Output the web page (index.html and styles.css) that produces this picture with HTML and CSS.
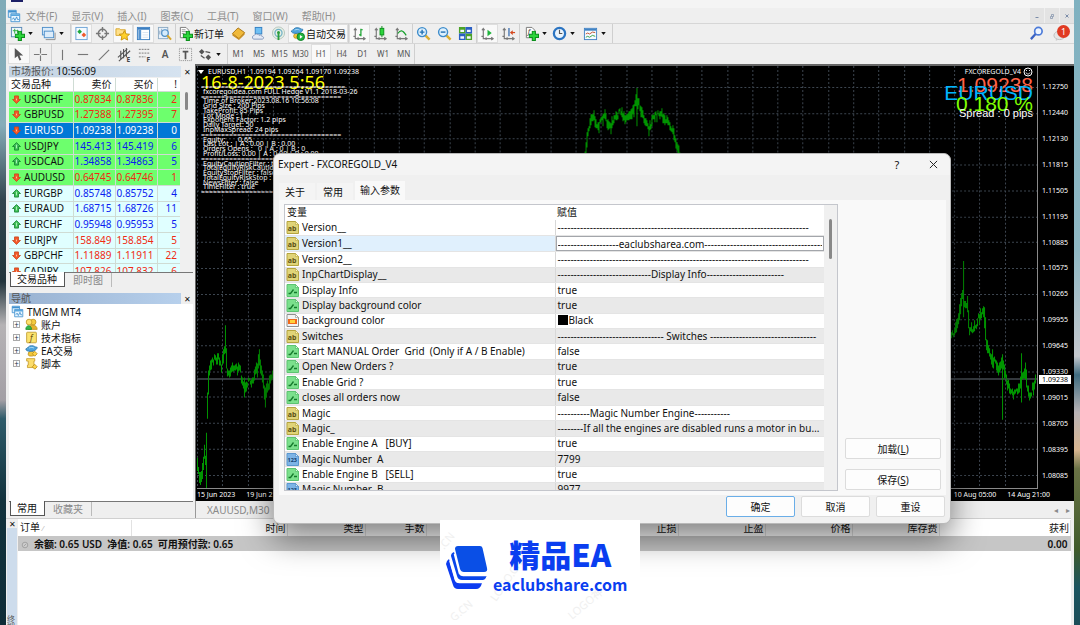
FILE: index.html
```
<!DOCTYPE html>
<html lang="zh-CN">
<head>
  <meta charset="UTF-8">
  <title>TMGM MT4 - EURUSD,H1</title>
  <meta name="viewport" content="width=device-width, initial-scale=1.0">
  <link rel="stylesheet" href="styles.css">
</head>
<body>
  <!-- shared icons -->
  <svg class="defs" aria-hidden="true">
    <symbol id="i-caret" viewBox="0 0 6 4"><path d="M0 0h6L3 4z" fill="#111"/></symbol>
    <symbol id="i-up" viewBox="0 0 10 10"><path d="M5 .6 9.4 5 7.2 5 7.2 9 2.8 9 2.8 5 .6 5z" fill="#3fc25a" stroke="#11802c" stroke-width=".9"/><path d="M5 3v4" stroke="#b6f5c0"/></symbol>
    <symbol id="i-down" viewBox="0 0 10 10"><path d="M5 9.4 .6 5 2.8 5 2.8 1 7.2 1 7.2 5 9.4 5z" fill="#f4592a" stroke="#c8441a" stroke-width=".9"/><path d="M5 4v2" stroke="#ffc9a8"/></symbol>
    <symbol id="i-ab" viewBox="0 0 13 13"><path d="M1 .5h8.500l3 3v9h-11.500z" fill="#e0d478" stroke="#b5a53f"/><path d="M9.500 .5v3h3z" fill="#fff7bd" stroke="#b5a53f" stroke-width=".6"/><text x="1.800" y="9.600" font-size="7" font-weight="700" fill="#5d5215">ab</text></symbol>
    <symbol id="i-bool" viewBox="0 0 13 13"><path d="M1 .5h8.500l3 3v9h-11.500z" fill="#7be08c" stroke="#5cc471"/><path d="M9.500 .5v3h3z" fill="#d5ffda" stroke="#45b05a" stroke-width=".6"/><path d="M2.500 9.500h2l3-4M8 8.500h3" fill="none" stroke="#157a2c" stroke-width="1.300"/></symbol>
    <symbol id="i-num" viewBox="0 0 13 13"><path d="M1 .5h8.500l3 3v9h-11.500z" fill="#7db4e6" stroke="#5a97cf"/><path d="M9.500 .5v3h3z" fill="#d6ebff" stroke="#4484bf" stroke-width=".6"/><text x="1.500" y="9" font-size="5.500" font-weight="700" fill="#123f6d">123</text></symbol>
    <symbol id="i-color" viewBox="0 0 13 13"><path d="M1 .5h8.500l3 3v9h-11.500z" fill="#f3f3f3" stroke="#8f8f8f"/><path d="M9.500 .5v3h3z" fill="#fff" stroke="#8f8f8f" stroke-width=".6"/><rect x="2" y="5" width="9" height="5" fill="#f26a1b"/><rect x="4" y="6" width="5" height="3" fill="#ffd23c"/></symbol>
    <symbol id="i-app" viewBox="0 0 16 16"><path d="M1.500 1.500h9v8h-9z" fill="#d9edfb" stroke="#3f90cf"/><path d="M1.500 3h9" stroke="#3f90cf" stroke-width="2"/><path d="M4.500 5.500h10v9h-10z" fill="#e9f6ff" stroke="#3f90cf"/><path d="M4.500 7h10" stroke="#59a6dd" stroke-width="2"/><path d="M6 12l1.500-2 1.500 3 2-4 1 3h1.500" fill="none" stroke="#3f90cf"/></symbol>
    <symbol id="i-axes" viewBox="0 0 16 16"><path d="M3.500 2.500v11h10M2 4.500l1.500-2 1.500 2M12 12l2 1.500-2 1.500M1.500 11h2M6.500 12v3" fill="none" stroke="#777" stroke-width="1.200"/></symbol>
    <symbol id="i-plus" viewBox="0 0 10 10"><path d="M3.500 .5h3v3h3v3h-3v3h-3v-3h-3v-3h3z" fill="#2bd53b" stroke="#0b8f1b"/></symbol>
    <symbol id="i-hat" viewBox="0 0 16 16"><path d="M4 13c0-3 1-4 4-4s4 2 4 4-8 3-8 0z" fill="#f0c63b" stroke="#b68a16"/><path d="M1 6c3-1 3-4 7-4s4 2 7 2c0 3-4 5-8 5S1 8 1 6z" fill="#4da3dc" stroke="#2c76ad"/><path d="M5 5c2-1 5-1 6 0" stroke="#bfe4fb" fill="none"/></symbol>
  </svg>

  <div class="app">
    <header class="titlebar"><span class="app-badge"></span></header>

    <nav class="menubar">
      <svg class="menu-logo"><use href="#i-app"/></svg>
      <button>文件(F)</button>
      <button>显示(V)</button>
      <button>插入(I)</button>
      <button>图表(C)</button>
      <button>工具(T)</button>
      <button>窗口(W)</button>
      <button>帮助(H)</button>
      <div class="mdi-buttons">
        <button aria-label="最小化"><svg viewBox="0 0 8 8"><path d="M2.500 5.500h3" stroke="#7b8ca8"/></svg></button>
        <button aria-label="还原"><svg viewBox="0 0 8 8"><path d="M2.500 4.500h2v2h-2zM3.500 4V2.500h2v2h-1" fill="none" stroke="#7b8ca8" stroke-width=".7"/></svg></button>
        <button aria-label="关闭"><svg viewBox="0 0 8 8"><path d="M2.500 2.500l3 3M5.500 2.500l-3 3" stroke="#7b8ca8"/></svg></button>
      </div>
    </nav>

    <div class="toolbar toolbar-main">
      <button class="tool drop" aria-label="新图表">
        <svg viewBox="0 0 16 16"><rect x="1.500" y="1.500" width="11" height="10" fill="#eef6fd" stroke="#5788b5"/><path d="M3 5h6M5 3v5M8 4v4" stroke="#2fae3e"/><use href="#i-plus" x="5" y="5" width="11" height="11"/></svg>
        <svg class="caret"><use href="#i-caret"/></svg>
      </button>
      <button class="tool drop" aria-label="配置">
        <svg viewBox="0 0 16 16"><rect x="1.500" y="1.500" width="11" height="8" fill="#dcecfa" stroke="#4e8fca"/><rect x="3.500" y="5.500" width="10" height="7" fill="#dcecfa" stroke="#4e8fca"/><path d="M5 14.500h10V7" fill="none" stroke="#8d8d8d"/></svg>
        <svg class="caret"><use href="#i-caret"/></svg>
      </button>
      <div class="group group-views">
        <button class="tool on" aria-label="市场报价"><svg viewBox="0 0 16 16"><rect x="2" y="1.500" width="12" height="13" fill="#f4faff" stroke="#6aa2d6"/><path d="M6 3.500l2.500 2.500L6 8.500 3.500 6z" fill="#1fa83c"/><path d="M10.500 7l2.500 2.500-2.500 2.500L8 9.500z" fill="#ef5a2b"/></svg></button>
        <button class="tool" aria-label="十字准线"><svg viewBox="0 0 16 16"><circle cx="8" cy="8" r="4.500" fill="none" stroke="#777" stroke-width="1.500"/><path d="M8 1v5M8 10v5M1 8h5M10 8h5" stroke="#777" stroke-width="1.500"/></svg></button>
        <button class="tool on" aria-label="导航"><svg viewBox="0 0 16 16"><path d="M1 3h4l1 1h5v6H1z" fill="#ffe08a" stroke="#d6a62e"/><path d="M10 5l1.700 3.400 3.800.4-2.800 2.500.8 3.700-3.500-1.900L6.500 15l.8-3.700L4.500 8.800l3.800-.4z" fill="#ffd028" stroke="#c8920b"/></svg></button>
        <button class="tool on" aria-label="数据窗口"><svg viewBox="0 0 16 16"><rect x="1.500" y="1.500" width="13" height="13" fill="#fff" stroke="#3b7fc2"/><path d="M2 3h12" stroke="#3b7fc2" stroke-width="2"/><path d="M4 4v10" stroke="#5895d0" stroke-width="3"/><path d="M7 7h6M7 9.500h6M7 12h6" stroke="#d5e3f1"/></svg></button>
        <button class="tool" aria-label="策略测试"><svg viewBox="0 0 16 16"><rect x="1.500" y="1.500" width="10" height="12" fill="#e7f1fa" stroke="#8ba8c2"/><path d="M3 5v4M5 3v6" stroke="#8ba8c2"/><circle cx="8.500" cy="7.500" r="3.500" fill="#d5ecfc" stroke="#4c8fc7" stroke-width="1.300"/><path d="M11 10l4 4.500" stroke="#d9a72c" stroke-width="2.200"/></svg></button>
      </div>
      <button class="tool text">
        <svg viewBox="0 0 16 16"><path d="M2.500 1.500h6l3 3v8h-9z" fill="#fff" stroke="#777"/><path d="M4 4h4M4 6h5M4 8h3" stroke="#999"/><use href="#i-plus" x="5" y="5" width="11" height="11"/></svg>
        <span>新订单</span>
      </button>
      <button class="tool narrow" aria-label="编辑器"><svg viewBox="0 0 16 16"><path d="M1.500 8l6-6 7 5-6 6.500z" fill="#f0b93a" stroke="#a87413"/><path d="M1.500 8v2l7 5 6-6V7l-6 6.500z" fill="#c98d1f"/></svg></button>
      <button class="tool narrow" aria-label="主机"><svg viewBox="0 0 16 16"><rect x="4.500" y="1.500" width="7" height="7" fill="#6fc0f4" stroke="#2f7ec2"/><path d="M3 14c-2 0-2-4 .5-4 1-2 4-2 5 0 2-1 3 0 3 1 2.500 0 2.500 3 .5 3z" fill="#e4eaf5" stroke="#8499bd"/></svg></button>
      <button class="tool narrow" aria-label="信号"><svg viewBox="0 0 16 16"><circle cx="8" cy="7.500" r="6.500" fill="#e6eee4" stroke="#b5c6bd"/><circle cx="8" cy="7.500" r="3.800" fill="none" stroke="#6fb0c6" stroke-width="1.300"/><circle cx="8" cy="7" r="1.600" fill="#2a9d3b"/><path d="M8 8v7" stroke="#2a9d3b" stroke-width="2"/></svg></button>
      <button class="tool text on">
        <svg viewBox="0 0 16 16"><use href="#i-hat" width="15" height="14"/><circle cx="11.500" cy="11.500" r="4" fill="#1fb43c" stroke="#0f8227"/><path d="M10.500 9.500l3 2-3 2z" fill="#fff"/></svg>
        <span>自动交易</span>
      </button>
      <div class="group group-3">
        <button class="tool on" aria-label="柱状图"><svg viewBox="0 0 16 16"><use href="#i-axes"/><path d="M9.500 3v8M9.500 4h2M7.500 9.500h2" stroke="#15a02b" stroke-width="1.300"/></svg></button>
        <button class="tool" aria-label="蜡烛图"><svg viewBox="0 0 16 16"><use href="#i-axes"/><path d="M9.500 0v12" stroke="#0b8f1b"/><rect x="7.500" y="2.500" width="4" height="7" fill="#2bd53b" stroke="#0b8f1b"/></svg></button>
        <button class="tool" aria-label="折线图"><svg viewBox="0 0 16 16"><use href="#i-axes"/><path d="M4 8c3-4 5-4 9 2" fill="none" stroke="#15a02b" stroke-width="1.300"/></svg></button>
      </div>
      <div class="group group-3">
        <button class="tool" aria-label="放大"><svg viewBox="0 0 16 16"><path d="M10 10l4.500 4.500" stroke="#dbae2f" stroke-width="2.600"/><circle cx="6.500" cy="6.500" r="4.800" fill="#dff1fd" stroke="#3d8ccb" stroke-width="1.500"/><path d="M4 6.500h5M6.500 4v5" stroke="#2171b4" stroke-width="1.500"/></svg></button>
        <button class="tool" aria-label="缩小"><svg viewBox="0 0 16 16"><path d="M10 10l4.500 4.500" stroke="#dbae2f" stroke-width="2.600"/><circle cx="6.500" cy="6.500" r="4.800" fill="#dff1fd" stroke="#3d8ccb" stroke-width="1.500"/><path d="M4 6.500h5" stroke="#2171b4" stroke-width="1.500"/></svg></button>
        <button class="tool" aria-label="平铺"><svg viewBox="0 0 16 16"><path d="M1 1h7v7H1zM8 8h7v7H8z" fill="#4aa227"/><path d="M8 1h7v7H8zM1 8h7v7H1z" fill="#2a5fc4"/><path d="M2.500 4h4v2.500h-4zM9.500 4h4v2.500h-4zM2.500 11h4v2.500h-4zM9.500 11h4v2.500h-4z" fill="#f3f8ff"/></svg></button>
      </div>
      <div class="group group-2">
        <button class="tool on" aria-label="自动滚动"><svg viewBox="0 0 16 16"><use href="#i-axes"/><path d="M8 4l4.500 3.500L8 11z" fill="#1fb43c"/></svg></button>
        <button class="tool" aria-label="图表平移"><svg viewBox="0 0 16 16"><use href="#i-axes"/><path d="M8.500 2v9" stroke="#3c6fb0" stroke-width="1.400"/><path d="M9.500 7l3-2.500v5z" fill="#d5481e"/><path d="M11 7h4" stroke="#d5481e" stroke-width="1.300"/></svg></button>
      </div>
      <button class="tool drop split" aria-label="技术指标">
        <svg viewBox="0 0 16 16"><path d="M2.500 1.500h6l3 3v8h-9z" fill="#fff" stroke="#777"/><text x="4" y="9" font-size="8" font-style="italic" fill="#444">f</text><use href="#i-plus" x="5" y="5" width="11" height="11"/></svg>
        <svg class="caret"><use href="#i-caret"/></svg>
      </button>
      <button class="tool drop" aria-label="周期">
        <svg viewBox="0 0 16 16"><circle cx="8" cy="8" r="6" fill="#eaf4fd" stroke="#2b74c2" stroke-width="2.400"/><path d="M8 4v4h3" fill="none" stroke="#555" stroke-width="1.200"/></svg>
        <svg class="caret"><use href="#i-caret"/></svg>
      </button>
      <button class="tool drop" aria-label="模板">
        <svg viewBox="0 0 16 16"><rect x="1.500" y="2.500" width="13" height="12" fill="#f5faff" stroke="#4183c4"/><path d="M2 4h12" stroke="#4183c4" stroke-width="2"/><path d="M3 8.500l2-1 2 1 3-2 3 .5" fill="none" stroke="#c0502d"/><path d="M3 12l2-1 2 1 3-2 3 1" fill="none" stroke="#2fa044"/></svg>
        <svg class="caret"><use href="#i-caret"/></svg>
      </button>
      <span class="bar-end"></span>
      <div class="toolbar-right">
        <button class="tool narrow" aria-label="搜索"><svg viewBox="0 0 16 16"><circle cx="10" cy="5.500" r="4" fill="#eef5ff" stroke="#4c7bd9" stroke-width="1.800"/><path d="M7 8.500L2 14" stroke="#3b63c4" stroke-width="2.400"/></svg></button>
        <button class="tool chat" aria-label="消息"><svg viewBox="0 0 16 16"><ellipse cx="7" cy="10" rx="6" ry="4.500" fill="#e6e6e6" stroke="#bdbdbd"/><path d="M3 13v3l3-2z" fill="#ccc"/></svg><span class="badge">1</span></button>
      </div>
    </div>

    <div class="toolbar toolbar-lines">
      <div class="group group-2">
        <button class="tool on" aria-label="光标"><svg viewBox="0 0 16 16"><path d="M4 1v11l3-2.500 2 5 2-1-2-4.500h4z" fill="#555"/></svg></button>
        <button class="tool" aria-label="十字"><svg viewBox="0 0 16 16"><path d="M8 1v6M8 9v6M1 8h6M9 8h6" stroke="#777" stroke-width="1.200"/></svg></button>
      </div>
      <div class="group group-draw">
        <button class="tool" aria-label="垂直线"><svg viewBox="0 0 16 16"><path d="M8 3v11" stroke="#777" stroke-width="1.200"/></svg></button>
        <button class="tool" aria-label="水平线"><svg viewBox="0 0 16 16"><path d="M3 8h11" stroke="#777" stroke-width="1.200"/></svg></button>
        <button class="tool" aria-label="趋势线"><svg viewBox="0 0 16 16"><path d="M3 14L14 3" stroke="#777" stroke-width="1.200"/></svg></button>
        <button class="tool" aria-label="通道"><svg viewBox="0 0 16 16"><path d="M1 11L11 2M2 15L14 4M4 4v9M7 2v10M10 1v10" stroke="#555" stroke-width="1.200"/><text x="10" y="16" font-size="7" font-weight="700" fill="#444">E</text></svg></button>
        <button class="tool" aria-label="斐波那契"><svg viewBox="0 0 16 16"><path d="M2 2.500h12M2 6.500h12M2 10.500h7" stroke="#777" stroke-dasharray="2 1"/><text x="10" y="16" font-size="7" font-weight="700" fill="#444">F</text></svg></button>
        <button class="tool letter">A</button>
        <button class="tool" aria-label="文字标签"><svg viewBox="0 0 16 16"><rect x="1.500" y="1.500" width="13" height="13" fill="none" stroke="#888" stroke-dasharray="1 1"/><path d="M5 5h6M8 5v8" stroke="#555" stroke-width="1.800"/></svg></button>
      </div>
      <button class="tool drop" aria-label="箭头">
        <svg viewBox="0 0 16 16"><path d="M4 2l3 3-3 3-3-3zM11 8l3 3-3 3-3-3z" fill="#555"/><path d="M8 5l5 1M3 9l4 3" stroke="#555" stroke-width="1.400"/></svg>
        <svg class="caret"><use href="#i-caret"/></svg>
      </button>
      <div class="group group-periods">
        <button class="tool">M1</button>
        <button class="tool">M5</button>
        <button class="tool">M15</button>
        <button class="tool">M30</button>
        <button class="tool on">H1</button>
        <button class="tool">H4</button>
        <button class="tool">D1</button>
        <button class="tool">W1</button>
        <button class="tool">MN</button>
      </div>
      <span class="bar-end"></span>
    </div>

    <main class="workspace">
      <aside class="sidebar">
        <section class="panel market">
          <h2 class="panel-title"><span>市场报价: <b>10:56:09</b></span><button aria-label="关闭">✕</button></h2>
          <div class="market-body">
            <table class="quotes">
              <thead><tr><th>交易品种</th><th>卖价</th><th>买价</th><th>!</th></tr></thead>
              <tbody>
                <tr class="hot down"><td><svg><use href="#i-down"/></svg>USDCHF</td><td>0.87834</td><td>0.87836</td><td>2</td></tr>
                <tr class="hot down"><td><svg><use href="#i-down"/></svg>GBPUSD</td><td>1.27388</td><td>1.27395</td><td>7</td></tr>
                <tr class="picked"><td><svg><use href="#i-down"/></svg>EURUSD</td><td>1.09238</td><td>1.09238</td><td>0</td></tr>
                <tr class="hot up"><td><svg><use href="#i-up"/></svg>USDJPY</td><td>145.413</td><td>145.419</td><td>6</td></tr>
                <tr class="hot up"><td><svg><use href="#i-up"/></svg>USDCAD</td><td>1.34858</td><td>1.34863</td><td>5</td></tr>
                <tr class="hot down"><td><svg><use href="#i-down"/></svg>AUDUSD</td><td>0.64745</td><td>0.64746</td><td>1</td></tr>
                <tr class="up"><td><svg><use href="#i-up"/></svg>EURGBP</td><td>0.85748</td><td>0.85752</td><td>4</td></tr>
                <tr class="up"><td><svg><use href="#i-up"/></svg>EURAUD</td><td>1.68715</td><td>1.68726</td><td>11</td></tr>
                <tr class="up"><td><svg><use href="#i-up"/></svg>EURCHF</td><td>0.95948</td><td>0.95953</td><td>5</td></tr>
                <tr class="down"><td><svg><use href="#i-down"/></svg>EURJPY</td><td>158.849</td><td>158.854</td><td>5</td></tr>
                <tr class="down"><td><svg><use href="#i-down"/></svg>GBPCHF</td><td>1.11889</td><td>1.11911</td><td>22</td></tr>
                <tr class="down"><td><svg><use href="#i-down"/></svg>CADJPY</td><td>107.826</td><td>107.832</td><td>6</td></tr>
              </tbody>
            </table>
            <div class="scroll"><span class="thumb"></span></div>
          </div>
          <div class="panel-tabs"><button class="active">交易品种</button><button>即时图</button></div>
        </section>

        <section class="panel navigator">
          <h2 class="panel-title blue"><span>导航</span><button aria-label="关闭">✕</button></h2>
          <ul class="tree">
            <li><svg><use href="#i-app"/></svg>TMGM MT4</li>
            <li class="child"><i>+</i><svg viewBox="0 0 16 16"><circle cx="10" cy="5" r="3.500" fill="#f5cb3e" stroke="#c09520"/><path d="M4 14c0-7 11-7 11 0z" fill="#e4b22b" stroke="#c09520"/><circle cx="5" cy="5" r="3.500" fill="#ffe06d" stroke="#c09520"/><path d="M1 14c0-6 7-6 7 0z" fill="#37b84b" stroke="#1b8a2f"/></svg>账户</li>
            <li class="child"><i>+</i><svg viewBox="0 0 16 16"><rect x="2" y="1.500" width="12" height="13" rx="1" fill="#fbe36f" stroke="#bd972a"/><text x="6" y="12" font-size="10" font-style="italic" fill="#6d5310">f</text></svg>技术指标</li>
            <li class="child"><i>+</i><svg viewBox="0 0 16 16"><use href="#i-hat"/><path d="M12 9l3 3-3 3-3-3z" fill="#ffd44a" stroke="#b68a16"/></svg>EA交易</li>
            <li class="child"><i>+</i><svg viewBox="0 0 16 16"><path d="M2 2h10v3h-1v8H3v-3h1V5H2z" fill="#fbdc6a" stroke="#c59b2a"/><path d="M12 9l3 3-3 3-3-3z" fill="#ffd44a" stroke="#b68a16"/></svg>脚本</li>
          </ul>
          <div class="panel-tabs"><button class="active">常用</button><button>收藏夹</button></div>
        </section>
      </aside>

      <section class="chart-area">
        <div class="chart">
          <div class="plot">
            <svg id="plot" viewBox="0 0 841 420" preserveAspectRatio="none"></svg>
            <div class="chart-head"><svg class="mark"><path d="M0 0h6L3 4z" fill="#fff"/></svg>EURUSD,H1&nbsp; 1.09194 1.09264 1.09170 1.09238</div>
            <div class="expert-note">
              <p class="stamp">16-8-2023 5:56</p>
              <p class="rule">====================================</p>
              <p>fxcoregoldea.com FULL Hedge V1.1 2018-03-26</p>
              <p class="rule">===================================</p>
              <p>Time of Broker:2023.08.16 10:56:08</p>
              <p>Grid Size : 200 Pips</p>
              <p>TakeProfit: 85 Pips</p>
              <p>Lot Mode : 1</p>
              <p>Exponent Factor: 1.2 pips</p>
              <p>Daily Target: 50</p>
              <p>InpMaxSpread: 24 pips</p>
              <p class="rule">===================================</p>
              <p>Equity:&nbsp; &nbsp; &nbsp; &nbsp;0.65</p>
              <p>Last Lot : | A : 0.00 | B : 0.00</p>
              <p>Orders Opens :&nbsp; &nbsp;0 | A : 0 | B : 0</p>
              <p>Profit/Loss: 0.00 | A : 0.00 | B : 0.00</p>
              <p class="rule">===================================</p>
              <p>EquityCautionFilter : true</p>
              <p>TotalEquityRiskCaution : 20</p>
              <p>EquityStopFilter : false</p>
              <p>TotalEquityRiskStop : 100</p>
              <p>NewsFilter : false</p>
              <p>TimeFilter : true</p>
              <p class="rule">===================================</p>
            </div>
            <div class="price-note">
              <p class="ea-name">FXCOREGOLD_V4 <svg viewBox="0 0 10 10"><circle cx="5" cy="5" r="4" fill="none" stroke="#fff"/><path d="M3 5.500c.5 2 3.500 2 4 0M3.500 3v1M6.500 3v1" fill="none" stroke="#fff" stroke-width=".9"/></svg></p>
              <p class="bid">1.09238</p>
              <p class="pair">EURUSD</p>
              <p class="change">0.180 %</p>
              <p class="spread">Spread : 0 pips</p>
            </div>
          </div>
          <div class="prices">
            <span>1.12750</span><span>1.12440</span><span>1.12130</span><span>1.11815</span>
            <span>1.11505</span><span>1.11195</span><span>1.10885</span><span>1.10575</span>
            <span>1.10265</span><span>1.09955</span><span>1.09645</span><span>1.09330</span>
            <span>1.09015</span><span>1.08705</span><span>1.08395</span><span>1.08085</span>
            <b>1.09238</b>
          </div>
          <div class="times"><span>15 Jun 2023</span><span>19 Jun 21:00</span><span class="late">10 Aug 05:00</span><span>14 Aug 21:00</span></div>
        </div>
        <div class="chart-tabs"><button>XAUUSD,M30</button><span class="arrows"><button aria-label="左">◂</button><button aria-label="右">▸</button></span></div>
      </section>
    </main>

    <section class="terminal">
      <div class="terminal-side"><button aria-label="关闭">✕</button><span>终端</span></div>
      <table class="orders">
        <colgroup><col class="c-order"><col class="c-time"><col class="c-type"><col class="c-lots"><col class="c-type"><col class="c-price"><col class="c-price"><col class="c-price"><col class="c-price"><col class="c-price"><col></colgroup>
        <thead><tr><th>订单 <small>⁄</small></th><th>时间</th><th>类型</th><th>手数</th><th></th><th></th><th>止损</th><th>止盈</th><th>价格</th><th>库存费</th><th>获利</th></tr></thead>
        <tbody><tr><td colspan="10"><svg viewBox="0 0 10 10"><circle cx="5" cy="5" r="3.500" fill="#ccc" stroke="#999"/><path d="M3.500 6.500l3-3" stroke="#999"/></svg>余额: 0.65 USD&nbsp; 净值: 0.65&nbsp; 可用预付款: 0.65</td><td>0.00</td></tr></tbody>
      </table>
    </section>
  </div>

  <div class="dialog" role="dialog" aria-labelledby="dlg-title">
    <header class="dialog-title">
      <h1 id="dlg-title">Expert - FXCOREGOLD_V4</h1>
      <button aria-label="帮助">?</button>
      <button aria-label="关闭"><svg viewBox="0 0 10 10"><path d="M1 1l8 8M9 1L1 9" stroke="#222" stroke-width="1.100"/></svg></button>
    </header>
    <div class="dialog-tabs"><button>关于</button><button>常用</button><button class="active">输入参数</button></div>
    <div class="dialog-page">
      <div class="inputs">
        <div class="inputs-view">
          <table>
            <colgroup><col class="c-var"><col></colgroup>
            <thead><tr><th>变量</th><th>赋值</th></tr></thead>
            <tbody>
              <tr><td><svg><use href="#i-ab"/></svg>Version__</td><td>------------------------------------------------------------------------------</td></tr>
              <tr class="editing"><td><svg><use href="#i-ab"/></svg><label for="version1">Version1__</label></td><td><input id="version1" type="text" value="-------------------eaclubsharea.com-------------------------------------"></td></tr>
              <tr><td><svg><use href="#i-ab"/></svg>Version2__</td><td>------------------------------------------------------------------------------</td></tr>
              <tr class="alt"><td><svg><use href="#i-ab"/></svg>InpChartDisplay__</td><td>-----------------------------Display Info------------------------</td></tr>
              <tr><td><svg><use href="#i-bool"/></svg>Display Info</td><td>true</td></tr>
              <tr class="alt"><td><svg><use href="#i-bool"/></svg>Display background color</td><td>true</td></tr>
              <tr><td><svg><use href="#i-color"/></svg>background color</td><td><span class="swatch"></span>Black</td></tr>
              <tr class="alt"><td><svg><use href="#i-ab"/></svg>Switches</td><td>--------------------------------- Switches ---------------------------------</td></tr>
              <tr><td><svg><use href="#i-bool"/></svg>Start MANUAL Order&nbsp; Grid&nbsp; (Only if A / B Enable)</td><td>false</td></tr>
              <tr class="alt"><td><svg><use href="#i-bool"/></svg>Open New Orders ?</td><td>true</td></tr>
              <tr><td><svg><use href="#i-bool"/></svg>Enable Grid ?</td><td>true</td></tr>
              <tr class="alt"><td><svg><use href="#i-bool"/></svg>closes all orders now</td><td>false</td></tr>
              <tr><td><svg><use href="#i-ab"/></svg>Magic</td><td>----------Magic Number Engine-----------</td></tr>
              <tr class="alt"><td><svg><use href="#i-ab"/></svg>Magic_</td><td>--------If all the engines are disabled runs a motor in buy...</td></tr>
              <tr><td><svg><use href="#i-bool"/></svg>Enable Engine A&nbsp;&nbsp; [BUY]</td><td>true</td></tr>
              <tr class="alt"><td><svg><use href="#i-num"/></svg>Magic Number&nbsp; A</td><td>7799</td></tr>
              <tr><td><svg><use href="#i-bool"/></svg>Enable Engine B&nbsp;&nbsp; [SELL]</td><td>true</td></tr>
              <tr class="alt"><td><svg><use href="#i-num"/></svg>Magic Number&nbsp; B</td><td>9977</td></tr>
            </tbody>
          </table>
          <div class="scroll"><span class="thumb"></span></div>
        </div>
      </div>
      <div class="side-buttons">
        <button class="btn">加载(<u>L</u>)</button>
        <button class="btn">保存(<u>S</u>)</button>
      </div>
    </div>
    <footer class="dialog-buttons">
      <button class="btn primary">确定</button>
      <button class="btn">取消</button>
      <button class="btn">重设</button>
    </footer>
  </div>

  <div class="brand">
    <svg class="brand-marks" viewBox="0 0 200 100" aria-hidden="true">
      <g fill="#f0f0f0" font-size="11">
        <text transform="translate(4 30) rotate(-50)">.CN</text>
        <text transform="translate(56 82) rotate(-55)">LOGO.CN</text>
        <text transform="translate(14 102) rotate(-40)">G.CN</text>
        <text transform="translate(132 100) rotate(-40)">LOGO神</text>
      </g>
    </svg>
    <svg class="brand-logo" viewBox="0 0 42 43">
      <path d="M12 0h22q2 0 2.500 2l4.500 20q1 4-3 4H18q-3 0-4-3L9 3q0-3 3-3z" fill="#0a4fe6"/>
      <path d="M8 6l5.500 21q1 3 4 3h23q-1 4-4 4H16q-4 0-5-4L5 10q0-3 3-4z" fill="#0a46ea"/>
      <path d="M3 13l6 21q1 3 4 3h23q-1.500 6-6 6H12q-4 0-5-4L0 18q0-3 3-5z" fill="#0d3cf0"/>
      <path d="M8.500 8l5 19.500q1 2 3.500 2h23M4 15l5.500 19q1 2.500 4 2.500h24" fill="none" stroke="#fff" stroke-width="1.600"/>
    </svg>
    <div class="brand-text"><strong>精品EA</strong><span>eaclubshare.com</span></div>
  </div>

  <script src="chart.js"></script>
</body>
</html>
```
FILE: styles.css
```
* {
  box-sizing: border-box;
}
html, body {
  height: 100%;
  margin: 0;
}
body {
  position: relative;
  overflow: hidden;
  padding: 0 6px;
  font: 10px/14px "Noto Sans", "Noto Sans CJK SC", sans-serif;
  color: #111;
  background:
    linear-gradient(#7fabb8 0%, #86adb9 20%, #34454f 32%, #22343c 45%, #b5b3b5 52%, #a39fa5 64%, #2e5b6a 67%, #12323c 80%, #0e2c38 100%) left / 6px 100% no-repeat,
    linear-gradient(#7fb1c0 0%, #8fb8c4 40%, #c5c9cf 57%, #3f6c80 60%, #b9b4b6 66%, #d8b590 72%, #6b7346 75%, #3f5a2b 88%, #1c5560 94%, #1c4d58 100%) right / 6px 100% no-repeat;
}
button {
  margin: 0;
  padding: 0;
  border: 0;
  background: none;
  font: inherit;
  color: inherit;
}
h1, h2, p, ul {
  margin: 0;
  padding: 0;
  font-size: inherit;
  font-weight: normal;
}
table {
  border-collapse: collapse;
  border-spacing: 0;
}
th, td {
  padding: 0;
  font-weight: normal;
  text-align: left;
  white-space: nowrap;
}
.defs {
  position: absolute;
  width: 0;
  height: 0;
}

/* window */
.app {
  display: flex;
  flex-direction: column;
  height: 100%;
  background: #efefef;
}
.titlebar {
  height: 8px;
  background: #f4f4f4;
  padding-left: 5px;
}
.app-badge {
  display: block;
  width: 12px;
  height: 2px;
  background: #1b1f66;
}
.menubar {
  display: flex;
  align-items: center;
  height: 15px;
  color: #8e8e8e;
  gap: 14px;
}
.menu-logo {
  width: 14px;
  height: 14px;
  margin: 0 -9px 0 1px;
}
.mdi-buttons {
  display: flex;
  margin-left: auto;
  gap: 1px;
}
.mdi-buttons button {
  width: 14px;
  height: 15px;
  background: #e3e3e3;
}
.mdi-buttons svg {
  display: block;
  width: 8px;
  height: 8px;
  margin: auto;
}

/* toolbars */
.toolbar {
  display: flex;
  align-items: stretch;
  height: 20px;
  padding-left: 2px;
  border-top: 1px solid #d6d6d6;
}
.toolbar-lines {
  height: 21px;
}
.group {
  display: flex;
  border-left: 1px solid #cfcfcf;
}
.toolbar-lines .group:first-child {
  border-left: 0;
}
.group .tool {
  flex: 1;
}
.group-views { width: 105px; }
.group-draw { width: 145px; }
.group-3 { width: 64px; }
.group-2 { width: 43px; }
.group-periods { width: 187px; }
.tool {
  display: flex;
  align-items: center;
  justify-content: center;
  font-size: 8px;
  color: #555;
}
.tool.on {
  background: #f9f9f9;
  box-shadow: inset 0 0 0 1px #dedede;
}
.tool svg {
  width: 15px;
  height: 15px;
}
.tool.drop {
  width: 31px;
  justify-content: flex-start;
  padding-left: 2px;
  gap: 3px;
}
.tool.split {
  padding-left: 4px;
  border-left: 1px solid #cfcfcf;
}
.tool .caret {
  width: 5px;
  height: 3px;
}
.tool.narrow {
  width: 20px;
}
.tool.text {
  padding: 0 2px;
  gap: 1px;
  font-size: 10px;
  color: #111;
}
.group-views + .tool.text {
  padding: 0 4px 0 2px;
  border-left: 1px solid #cfcfcf;
}
.tool.letter {
  font-size: 10px;
  font-weight: 600;
}
.bar-end {
  border-left: 1px solid #cfcfcf;
}
.toolbar-right {
  display: flex;
  margin-left: auto;
  padding-right: 4px;
  gap: 4px;
}
.chat {
  position: relative;
  width: 20px;
}
.badge {
  position: absolute;
  top: 1px;
  right: 0;
  width: 13px;
  height: 13px;
  border-radius: 50%;
  background: #e03a22;
  color: #fff;
  font-size: 9px;
  line-height: 13px;
}

/* workspace */
.workspace {
  flex: 1;
  display: flex;
  min-height: 0;
}
.sidebar {
  display: flex;
  flex-direction: column;
  width: 189px;
  padding: 2px 2px 0 3px;
  gap: 4px;
}
.panel {
  display: flex;
  flex-direction: column;
}
.navigator {
  flex: 1;
  min-height: 0;
}
.panel-title {
  display: flex;
  justify-content: space-between;
  height: 11px;
  line-height: 11px;
  color: #555;
}
.panel-title span {
  flex: 1;
  padding-left: 2px;
  background: linear-gradient(90deg, #c3d3e3, #d6e3f0);
}
.panel-title.blue span {
  background: linear-gradient(90deg, #98b1d0, #b7d0ec);
}
.panel-title b {
  font-weight: normal;
  color: #111;
}
.panel-title button {
  width: 12px;
  font-size: 8px;
  color: #111;
}
.market-body {
  display: flex;
  height: 195px;
  margin-top: 1px;
  overflow: hidden;
  border-bottom: 1px solid #777;
}
.quotes {
  flex: 1;
  height: 202px;
  table-layout: fixed;
  background: #fff;
}
.quotes th, .quotes td {
  border: 1px solid #cfdcd4;
  border-width: 0 1px 1px 0;
  line-height: 13px;
  text-align: right;
  padding-right: 3px;
}
.quotes th:first-child, .quotes td:first-child {
  width: 64px;
  text-align: left;
  padding-left: 2px;
  color: #111;
}
.quotes th:nth-child(2), .quotes th:nth-child(3) {
  width: 42px;
}
.quotes th:last-child, .quotes td:last-child {
  border-right: 0;
}
.quotes svg {
  width: 9px;
  height: 9px;
  margin: 0 3px 0 1px;
  vertical-align: -1px;
}
.quotes tbody tr { background: #e0ffff; }
.quotes tbody .hot { background: #6dff6d; }
.quotes .up { color: #0a1cf0; }
.quotes .down { color: #f02a14; }
.quotes tbody .picked,
.quotes tbody .picked td {
  background: #0078d7;
  color: #fff;
}
.scroll {
  width: 13px;
  padding: 14px 5px;
  background: #f0f0f0;
}
.thumb {
  display: block;
  width: 3px;
  height: 18px;
  border-radius: 2px;
  background: #888;
}
.panel-tabs {
  display: flex;
  height: 16px;
  color: #8a8a8a;
}
.panel-tabs button {
  padding: 0 8px;
  margin-bottom: 2px;
  border-right: 1px solid #bbb;
}
.panel-tabs .active {
  padding: 0 7px 0 6px;
  margin: -1px 0 0 1px;
  height: 15px;
  color: #111;
  background: #fff;
  border: 1px solid #555;
  border-top: 0;
}
.tree {
  flex: 1;
  list-style: none;
  padding: 1px 2px;
  background: #fff;
  border-bottom: 1px solid #777;
}
.tree li {
  display: flex;
  align-items: center;
  height: 13px;
  gap: 3px;
}
.tree .child {
  padding-left: 2px;
}
.tree svg {
  width: 13px;
  height: 13px;
}
.tree i {
  width: 7px;
  height: 7px;
  margin-right: 2px;
  border: 1px solid #aaa;
  font: 8px/5px "Noto Sans", sans-serif;
  text-align: center;
  color: #234;
}

/* chart */
.chart-area {
  flex: 1;
  display: flex;
  flex-direction: column;
  min-width: 0;
}
.chart {
  flex: 1;
  display: grid;
  grid-template: 1fr 12px / 1fr 36px;
  min-height: 0;
  padding-left: 1px;
  border-top: 2px solid #666;
  border-left: 1px solid #666;
  background: #000;
  color: #fff;
  font-size: 7px;
  line-height: 10px;
}
.plot {
  position: relative;
  min-height: 0;
  border: 1px solid #8a8a8a;
  border-width: 0 1px 1px 0;
}
#plot {
  position: absolute;
  width: 100%;
  height: 100%;
}
.chart-head {
  position: absolute;
  top: 1px;
  left: 1px;
  display: flex;
  align-items: center;
  white-space: pre;
}
.mark {
  width: 6px;
  height: 4px;
  margin-right: 4px;
}
.expert-note {
  position: absolute;
  top: 12px;
  left: 6px;
  display: flex;
  flex-direction: column;
  height: 116px;
  line-height: 5px;
  white-space: nowrap;
}
.expert-note p {
  flex: 1;
  min-height: 0;
}
.expert-note .stamp {
  flex: none;
  height: 6px;
  margin-left: -2px;
  font-size: 18px;
  line-height: 9px;
  color: #ff0;
}
.expert-note .rule {
  margin-left: -2px;
}
.price-note {
  position: absolute;
  top: 1px;
  right: 4px;
  font-family: "Liberation Sans", sans-serif;
  font-size: 21px;
  line-height: 8px;
  text-align: right;
}
.price-note .ea-name {
  display: flex;
  align-items: center;
  justify-content: flex-end;
  gap: 2px;
  height: 10px;
  margin-bottom: 4px;
  font: 7px/10px "Noto Sans", sans-serif;
}
.ea-name svg {
  width: 10px;
  height: 10px;
}
.bid { color: #ff6347; }
.pair { color: #00b4ff; }
.change {
  color: #7fff00;
  line-height: 14px;
}
.price-note .spread {
  font-size: 11px;
  line-height: 4px;
}
.prices {
  position: relative;
  display: flex;
  flex-direction: column;
  justify-content: space-between;
  padding: 16px 0 8px 4px;
}
.prices b {
  position: absolute;
  top: 73%;
  left: 1px;
  right: 3px;
  padding-left: 3px;
  font-weight: normal;
  line-height: 9px;
  background: #fff;
  color: #000;
}
.times {
  grid-column: 1 / -1;
  display: flex;
  gap: 11px;
  line-height: 12px;
  white-space: nowrap;
}
.times .late {
  margin-left: auto;
}
.times span:last-child {
  padding-right: 24px;
}
.chart-tabs {
  display: flex;
  justify-content: space-between;
  align-items: center;
  height: 17px;
  padding: 0 4px 0 11px;
  border-left: 1px solid #999;
  color: #8a8a8a;
}
.arrows {
  display: flex;
  gap: 8px;
  font-size: 8px;
}

/* terminal */
.terminal {
  display: flex;
  height: 107px;
  margin-right: 3px;
  padding-top: 1px;
  border-top: 1px solid #d0d0d0;
  background: linear-gradient(90deg, #efefef 12px, #fff 12px);
}
.terminal-side {
  display: flex;
  flex-direction: column;
  align-items: center;
  width: 12px;
  overflow: hidden;
  font-size: 8px;
  line-height: 8px;
}
.terminal-side button {
  height: 11px;
}
.terminal-side span {
  flex: 1;
  width: 10px;
  padding-top: 87px;
  background: #cddcec;
  color: #555;
}
.orders {
  flex: 1;
  align-self: flex-start;
  table-layout: fixed;
  width: 0;
}
.orders th {
  height: 16px;
  padding-right: 1px;
  text-align: right;
  border-right: 1px solid #e2e2e2;
}
.orders th:first-child {
  padding-left: 2px;
  text-align: left;
}
.orders small {
  font-size: 7px;
  color: #aaa;
}
.orders td {
  height: 15px;
  padding: 0 3px;
  font-weight: 600;
  background: #c6c6c6;
}
.orders td:last-child {
  text-align: right;
}
.orders td svg {
  width: 8px;
  height: 8px;
  margin-right: 5px;
  vertical-align: -1px;
}
.c-order { width: 113px; }
.c-time { width: 156px; }
.c-type { width: 78px; }
.c-lots { width: 61px; }
.c-price { width: 87px; }

/* expert dialog */
.dialog {
  position: absolute;
  top: 153px;
  left: 273px;
  right: 129px;
  padding: 0 5px 6px;
  border: 1px solid #b9b9b9;
  border-radius: 7px;
  background: #f0f0f0;
  box-shadow: 0 14px 32px rgba(0, 0, 0, 0.5);
}
.dialog-title {
  display: flex;
  align-items: center;
  height: 21px;
  margin: 0 -5px;
  padding: 0 4px;
  border-radius: 7px 7px 0 0;
  background: #f4f4f4;
}
.dialog-title h1 {
  flex: 1;
  padding-bottom: 2px;
}
.dialog-title button {
  width: 26px;
  margin-left: 10px;
  font-size: 11px;
}
.dialog-title svg {
  display: block;
  width: 9px;
  height: 9px;
  margin: auto;
}
.dialog-tabs {
  display: flex;
  align-items: flex-end;
  height: 25px;
}
.dialog-tabs button {
  height: 17px;
  padding: 0 10px 0 6px;
  margin-right: 2px;
  background: #f4f4f4;
}
.dialog-tabs .active {
  height: 19px;
  padding: 0 5px 2px;
  background: #f9f9f9;
}
.dialog-page {
  display: flex;
  gap: 7px;
  margin-right: -1px;
  padding: 4px 5px;
  background: #f9f9f9;
}
.inputs {
  flex: 1;
  min-width: 0;
  border: 1px solid #c4c6cc;
  background: #fff;
}
.inputs-view {
  display: flex;
  height: 285px;
  overflow: hidden;
}
.inputs table {
  flex: 1;
  width: 0;
  height: 293px;
  table-layout: fixed;
}
.c-var {
  width: 270px;
}
.inputs th, .inputs td {
  overflow: hidden;
  height: 15px;
  padding-left: 2px;
  line-height: 13px;
  text-overflow: ellipsis;
}
.inputs td {
  border-bottom: 1px solid #e4e4e4;
}
.inputs td:first-child {
  padding-left: 1px;
  border-right: 1px solid #d8d8d8;
}
.inputs td svg {
  width: 13px;
  height: 13px;
  margin-right: 3px;
  vertical-align: top;
}
.inputs .alt {
  background: #e9e9e9;
}
.editing td {
  background: #e0f0fd;
}
.inputs .editing td:last-child {
  padding: 0;
  background: #fff;
}
.editing input {
  display: block;
  width: 100%;
  height: 15px;
  padding: 0 1px;
  border: 1px solid #a3a6ab;
  font: inherit;
  line-height: 13px;
  color: inherit;
}
.swatch {
  display: inline-block;
  width: 10px;
  height: 10px;
  margin-right: 1px;
  background: #000;
  vertical-align: -1px;
}
.inputs .thumb {
  height: 40px;
}
.side-buttons {
  display: flex;
  flex-direction: column;
  justify-content: flex-end;
  gap: 10px;
  width: 96px;
  padding-bottom: 1px;
}
.btn {
  height: 21px;
  border: 1px solid #dcdcdc;
  border-radius: 2px;
  background: #fdfdfd;
}
.dialog-buttons {
  display: flex;
  justify-content: flex-end;
  gap: 6px;
  padding-top: 1px;
}
.dialog-buttons .btn {
  width: 69px;
}
.dialog-buttons .primary {
  border-color: #6aaee8;
}

/* brand card */
.brand {
  position: absolute;
  top: 520px;
  left: 440px;
  display: flex;
  align-items: center;
  gap: 5px;
  width: 200px;
  height: 100px;
  padding-left: 6px;
  background: #fff;
}
.brand-marks {
  position: absolute;
  inset: 0;
}
.brand-logo {
  position: relative;
  width: 42px;
  height: 43px;
  margin-top: -6px;
}
.brand-text {
  position: relative;
  display: flex;
  flex-direction: column;
  align-items: center;
  gap: 2px;
  margin-top: -8px;
  font-family: "Noto Sans CJK SC", sans-serif;
  font-weight: 700;
  color: #0a3ef0;
}
.brand-text strong {
  font-size: 31px;
  line-height: 34px;
}
.brand-text span {
  font-size: 16px;
  line-height: 22px;
}
```
FILE: chart.js
```
const svg = document.getElementById('plot');
const W = 841;
const H = 420;

// trend points of the visible parts of the series: [x, y]
const series = [
  [[0, 400], [3, 412], [5, 402], [7, 385], [9, 398], [10, 335], [12, 300], [14, 294], [20, 290], [24, 298],
   [28, 278], [30, 306], [36, 298], [43, 304], [46, 318], [54, 314], [60, 302], [62, 292], [68, 330], [73, 308], [90, 312]],
  [[388, 92], [391, 64], [396, 50], [402, 60], [408, 50], [413, 62], [422, 46], [430, 52], [436, 44], [440, 32], [446, 48],
   [452, 62], [458, 50], [464, 46], [470, 56], [476, 62], [480, 78], [484, 90]],
  [[748, 268], [758, 268], [762, 250], [766, 225], [768, 236], [771, 240], [773, 266], [780, 256], [786, 244],
   [788, 248], [790, 275], [796, 292], [803, 302], [806, 292], [809, 308], [812, 318], [815, 326], [822, 324],
   [829, 302], [831, 320], [833, 326], [836, 322], [840, 310]]
];
const spikes = [[28, 258, 285], [47, 310, 330], [68, 320, 340], [440, 22, 60], [767, 194, 250], [796, 282, 300], [806, 290, 352], [825, 286, 335]];

function addPath(d, attrs) {
  const path = document.createElementNS('http://www.w3.org/2000/svg', 'path');
  path.setAttribute('d', d);
  path.setAttribute('fill', 'none');
  for (const key in attrs) path.setAttribute(key, attrs[key]);
  svg.appendChild(path);
}

// grid
let grid = '';
for (let i = 0; i <= 32; i++) grid += `M${Math.round(25.27 * i) + 0.5} 0V${H}`;
for (let i = 0; i <= 15; i++) grid += `M0 ${Math.round(21 + 25.7 * i) + 0.5}H${W}`;
addPath(grid, { stroke: '#3d4650', 'stroke-dasharray': '2 2' });

// current bid
addPath(`M0 311.5H${W}`, { stroke: '#66707a' });

// bars
let seed = 7;
function noise() {
  seed = (seed * 16807) % 2147483647;
  return seed / 2147483647;
}
let bars = '';
series.forEach(points => {
  for (let k = 0; k < points.length - 1; k++) {
    const [x0, y0] = points[k];
    const [x1, y1] = points[k + 1];
    const slope = Math.abs((y1 - y0) / (x1 - x0));
    for (let x = x0; x < x1; x++) {
      const y = y0 + (y1 - y0) * (x - x0) / (x1 - x0) + (noise() - 0.5) * 7;
      const half = 1 + slope / 2 + noise() * 4;
      bars += `M${x + 0.5} ${Math.round(y - half)}V${Math.round(y + half)}`;
    }
  }
});
spikes.forEach(([x, a, b]) => { bars += `M${x + 0.5} ${a}V${b}`; });
addPath(bars, { stroke: '#009400' });
```
